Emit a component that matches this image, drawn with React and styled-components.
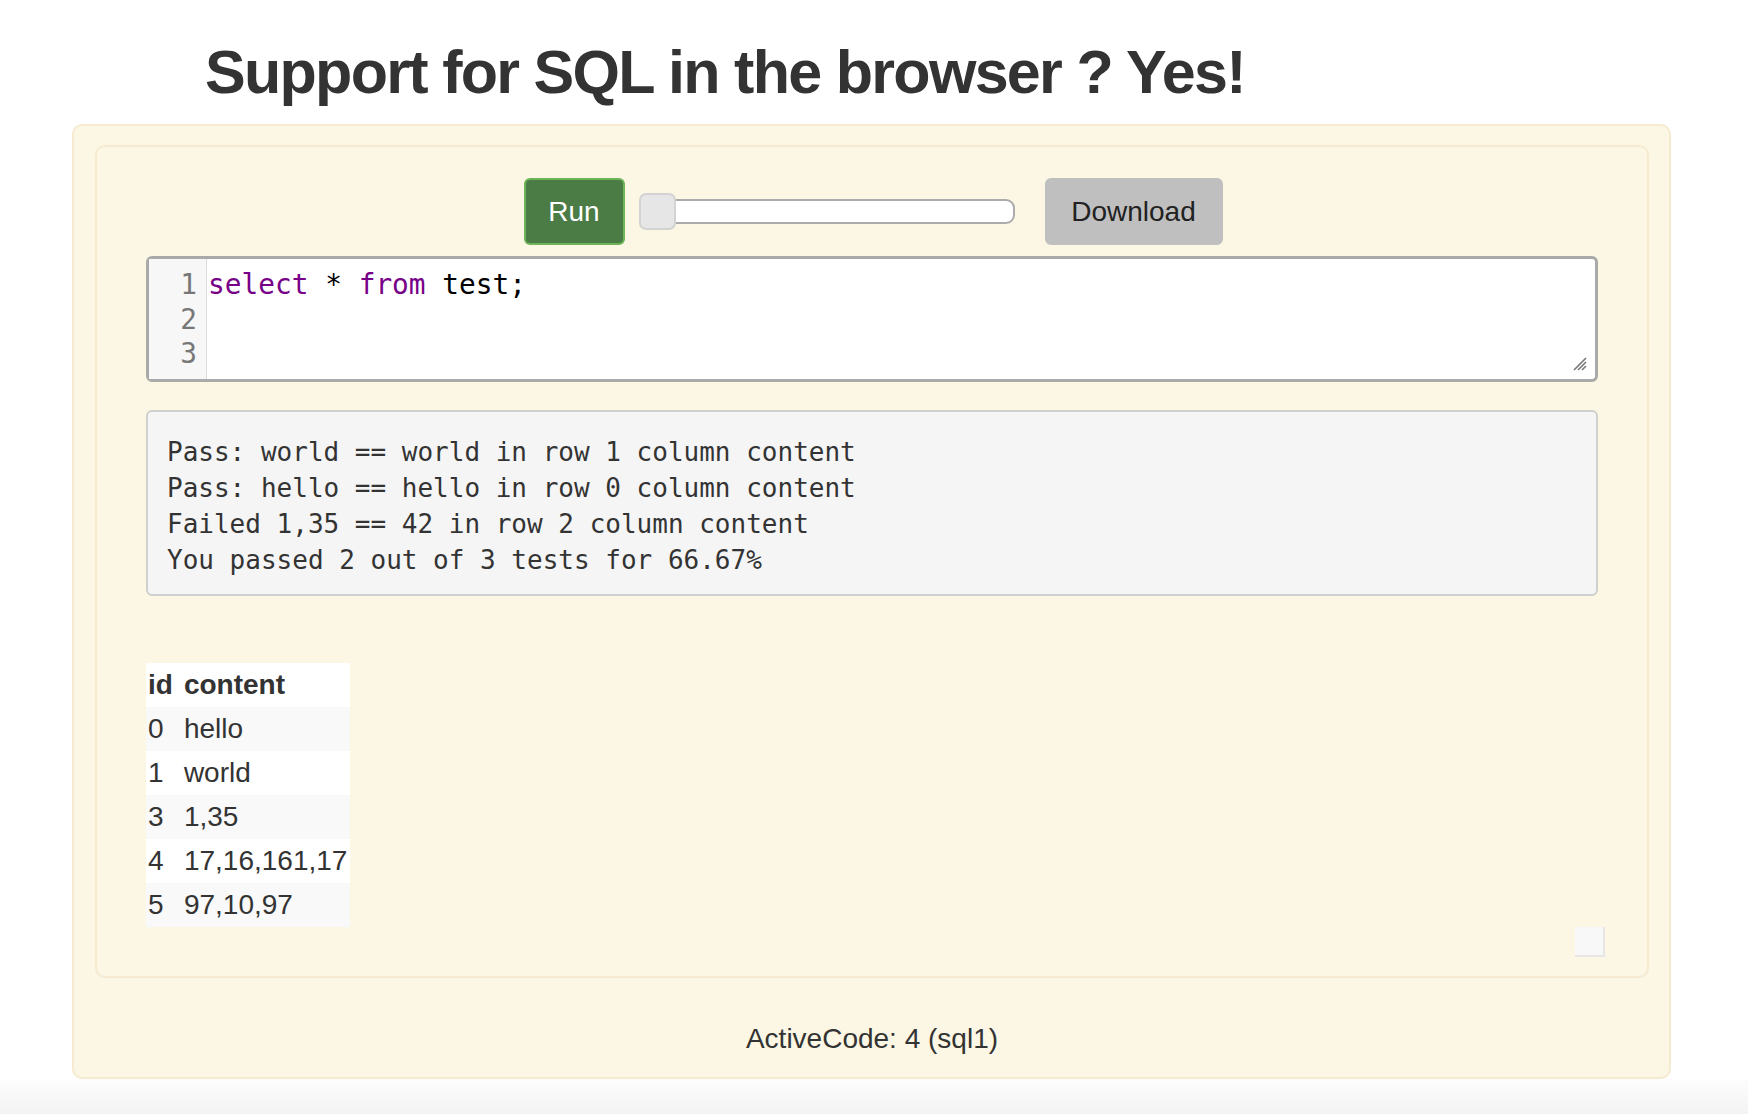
import React from "react";
import styled, { createGlobalStyle } from "styled-components";

const GlobalStyle = createGlobalStyle`
  html, body {
    margin: 0;
    padding: 0;
    background: #ffffff;
    font-family: "Liberation Sans", Arial, sans-serif;
    color: #333;
  }
`;

const Page = styled.div`
  width: 1748px;
  min-height: 1114px;
  display: flex;
  flex-direction: column;
`;

const Title = styled.h1`
  margin: 0 0 18px;
  padding: 39px 0 0 205px;
  font-size: 61px;
  line-height: 67px;
  font-weight: 700;
  letter-spacing: -1.7px;
  color: #333;
`;

const Section = styled.div`
  margin: 0 77px 0 72px;
  height: 955px;
  box-sizing: border-box;
  background: #fbf7e4;
  border: 2px solid #f6ead0;
  border-radius: 10px;
  padding: 19px 20px 0 21px;
  display: flex;
  flex-direction: column;
`;

const Inner = styled.div`
  height: 833px;
  box-sizing: border-box;
  border: 2px solid #f6ead0;
  border-radius: 10px;
  padding: 31px 49px 0 49px;
  display: flex;
  flex-direction: column;
`;

const Controls = styled.div`
  display: flex;
  justify-content: center;
  align-items: center;
  height: 67px;
  margin-left: 2px;
`;

const Button = styled.button`
  height: 67px;
  box-sizing: border-box;
  border-radius: 6px;
  font-family: "Liberation Sans", Arial, sans-serif;
  font-size: 28px;
  padding: 0;
  width: ${(p) => (p.$primary ? "101px" : "178px")};
  background: ${(p) => (p.$primary ? "#4b7c46" : "#bfbfbf")};
  color: ${(p) => (p.$primary ? "#fff" : "#222")};
  border: 2px solid ${(p) => (p.$primary ? "#6db459" : "#bfbfbf")};
`;

const Slider = styled.div`
  width: 376px;
  height: 37px;
  margin: 0 30px 0 14px;
  display: flex;
  align-items: center;
  position: relative;
`;

const Track = styled.div`
  flex: 1;
  height: 25px;
  box-sizing: border-box;
  margin-left: 12px;
  background: #fff;
  border: 2px solid #ababab;
  border-radius: 9px;
`;

const Thumb = styled.div`
  position: absolute;
  left: 0;
  top: 0;
  width: 37px;
  height: 37px;
  box-sizing: border-box;
  background: #e6e6e6;
  border: 2px solid #d3d3d3;
  border-radius: 7px;
`;

const Editor = styled.div`
  margin-top: 11px;
  height: 126px;
  box-sizing: border-box;
  border: 3px solid #a9a9a9;
  border-radius: 6px;
  background: #fff;
  display: flex;
  position: relative;
  font-family: "DejaVu Sans Mono", monospace;
  font-size: 27.8px;
  line-height: 34.5px;
`;

const Gutter = styled.div`
  width: 58px;
  box-sizing: border-box;
  background: #f7f7f7;
  border-right: 1px solid #dcdcdc;
  padding: 9px 9px 0 0;
  text-align: right;
  color: #777;
`;

const Code = styled.div`
  flex: 1;
  padding: 9px 0 0 1px;
  color: #000;
  white-space: pre;
`;

const Keyword = styled.span`
  color: #770088;
`;

const Grip = styled.svg`
  position: absolute;
  right: 8px;
  bottom: 8px;
`;

const Output = styled.pre`
  margin: 28px 0 0;
  height: 186px;
  box-sizing: border-box;
  background: #f5f5f5;
  border: 2px solid #cfcfcf;
  border-radius: 6px;
  padding: 22px 19px 0;
  font-family: "DejaVu Sans Mono", monospace;
  font-size: 26px;
  line-height: 36px;
  color: #333;
`;

const Table = styled.table`
  margin-top: 67px;
  border-collapse: collapse;
  font-size: 28px;
  color: #333;
  align-self: flex-start;
`;

const Row = styled.tr`
  height: 44px;
  background: ${(p) => (p.$odd ? "#f9f9f9" : "#fff")};
`;

const Cell = styled.td`
  padding: 0 3px 0 2px;
  font-weight: ${(p) => (p.$head ? 700 : 400)};
  &:first-child {
    padding-right: 9px;
  }
`;

const Toggle = styled.div`
  align-self: flex-end;
  width: 30px;
  height: 30px;
  margin: 0 -7px 0 0;
  box-sizing: border-box;
  background: #f8f8f8;
  border-right: 2px solid #e6e6e6;
  border-bottom: 2px solid #e6e6e6;
`;

const Caption = styled.div`
  flex: 1;
  display: flex;
  align-items: center;
  justify-content: center;
  font-size: 28px;
  color: #333;
  padding-top: 22px;
`;

const Bottom = styled.div`
  flex: 1;
  background: linear-gradient(#fdfdfd, #f3f3f3);
`;

const rows = [
  ["0", "hello"],
  ["1", "world"],
  ["3", "1,35"],
  ["4", "17,16,161,17"],
  ["5", "97,10,97"],
];

const results = [
  "Pass: world == world in row 1 column content",
  "Pass: hello == hello in row 0 column content",
  "Failed 1,35 == 42 in row 2 column content",
  "You passed 2 out of 3 tests for 66.67%",
];

export default function App() {
  return (
    <Page>
      <GlobalStyle />
      <Title>Support for SQL in the browser ? Yes!</Title>
      <Section>
        <Inner>
          <Controls>
            <Button $primary>Run</Button>
            <Slider>
              <Track />
              <Thumb />
            </Slider>
            <Button>Download</Button>
          </Controls>
          <Editor>
            <Gutter>
              <div>1</div>
              <div>2</div>
              <div>3</div>
            </Gutter>
            <Code>
              <Keyword>select</Keyword> * <Keyword>from</Keyword> test;
            </Code>
            <Grip width="16" height="16" viewBox="0 0 16 16">
              <path d="M15 3 L3 15 M15 7 L7 15 M15 11 L11 15" stroke="#777" strokeWidth="1.6" />
            </Grip>
          </Editor>
          <Output>{results.join("\n")}</Output>
          <Table>
            <tbody>
              <Row>
                <Cell $head>id</Cell>
                <Cell $head>content</Cell>
              </Row>
              {rows.map((r, i) => (
                <Row key={r[0]} $odd={i % 2 === 0}>
                  <Cell>{r[0]}</Cell>
                  <Cell>{r[1]}</Cell>
                </Row>
              ))}
            </tbody>
          </Table>
          <Toggle />
        </Inner>
        <Caption>ActiveCode: 4 (sql1)</Caption>
      </Section>
      <Bottom />
    </Page>
  );
}
